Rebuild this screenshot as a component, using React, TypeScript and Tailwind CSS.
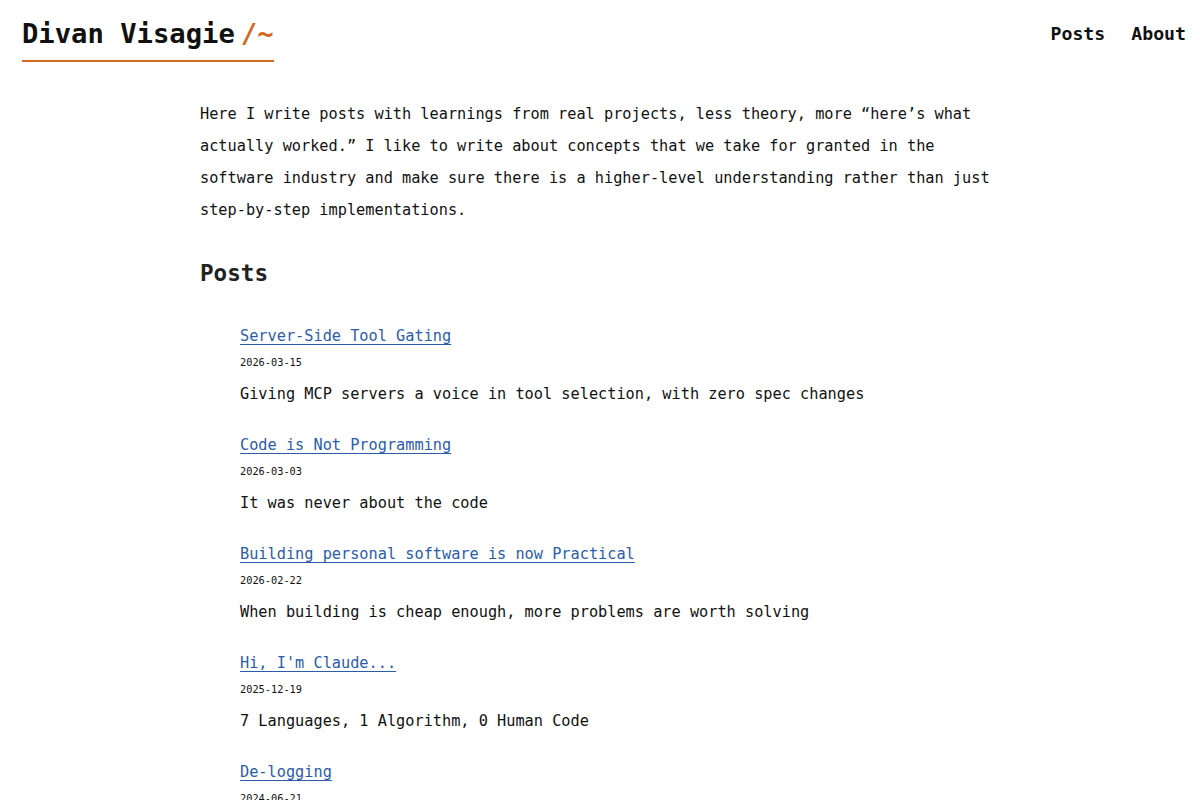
import React from "react";

type Post = { title: string; date: string; summary?: string };

const posts: Post[] = [
  {
    title: "Server-Side Tool Gating",
    date: "2026-03-15",
    summary: "Giving MCP servers a voice in tool selection, with zero spec changes",
  },
  { title: "Code is Not Programming", date: "2026-03-03", summary: "It was never about the code" },
  {
    title: "Building personal software is now Practical",
    date: "2026-02-22",
    summary: "When building is cheap enough, more problems are worth solving",
  },
  { title: "Hi, I'm Claude...", date: "2025-12-19", summary: "7 Languages, 1 Algorithm, 0 Human Code" },
  { title: "De-logging", date: "2024-06-21", summary: "Stop logging everything, start measuring" },
];

const mono = { fontFamily: '"DejaVu Sans Mono", "Liberation Mono", monospace' };

export default function App() {
  return (
    <div className="min-h-screen bg-white text-[#111]" style={mono}>
      <header className="flex items-start justify-between pl-[22px] pr-[14px] pt-[16px]">
        <a className="flex items-baseline border-b-2 border-[#d2691e] pb-[8px]">
          <span className="text-[27.2px] font-bold leading-[36px] text-[#111]">Divan Visagie</span>
          <span className="ml-[6px] text-[27.2px] font-bold leading-[36px] text-[#d2691e]">/~</span>
        </a>
        <nav className="flex gap-[26px] pt-[6px]">
          <a className="text-[18.2px] font-bold leading-[24px] text-[#111]">Posts</a>
          <a className="text-[18.2px] font-bold leading-[24px] text-[#111]">About</a>
        </nav>
      </header>

      <main className="mx-auto w-[800px] pt-[36px]">
        <p className="text-[15.25px] leading-[32px] text-[#111]">
          Here I write posts with learnings from real projects, less theory, more “here’s what actually
          worked.” I like to write about concepts that we take for granted in the software industry and
          make sure there is a higher-level understanding rather than just step-by-step implementations.
        </p>

        <h2 className="mt-[31px] text-[22.6px] font-bold leading-[32px] text-[#222]">Posts</h2>

        <ul className="mt-[35px] pl-[40px]">
          {posts.map((p) => (
            <li key={p.title} className="mb-[27px]">
              <a className="block text-[15.25px] leading-[24px] text-[#2a5caa] underline underline-offset-[3px]">
                {p.title}
              </a>
              <div className="mt-[7px] text-[10.3px] leading-[14px] text-[#111]">{p.date}</div>
              <div className="mt-[13px] text-[15.25px] leading-[24px] text-[#111]">{p.summary}</div>
            </li>
          ))}
        </ul>
      </main>
    </div>
  );
}
